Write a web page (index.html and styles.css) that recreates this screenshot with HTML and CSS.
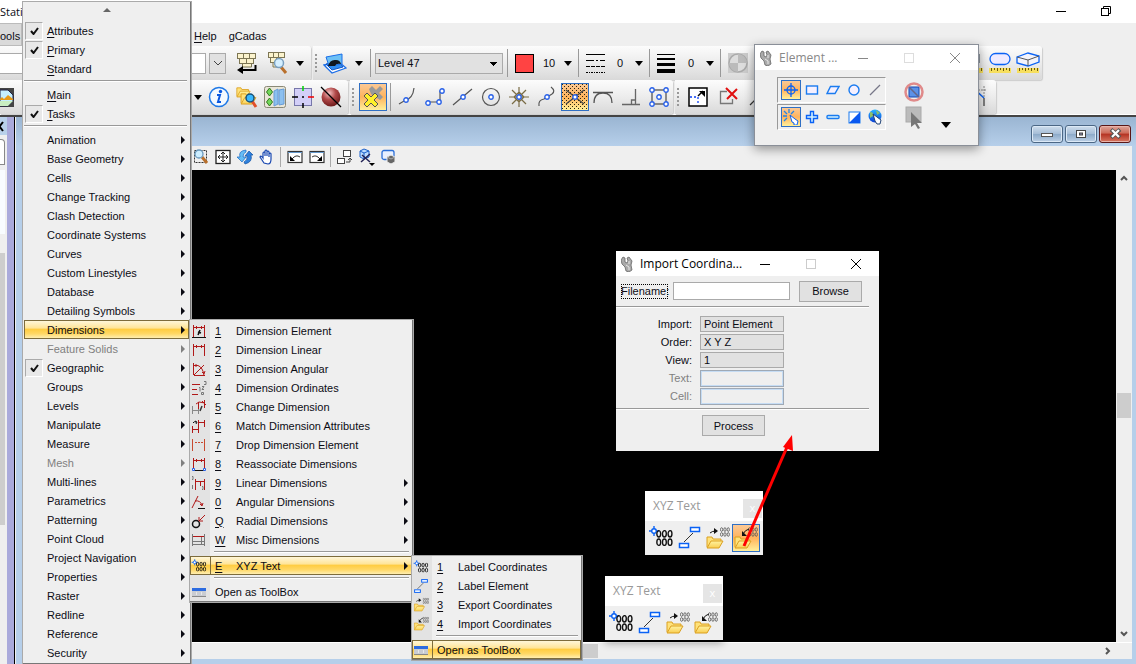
FILE: index.html
```html
<!DOCTYPE html>
<html lang="en">
<head>
<meta charset="utf-8">
<title>MicroStation</title>
<link rel="stylesheet" href="styles.css">
</head>
<body>
<svg class="defs" aria-hidden="true">
  <defs>
    <linearGradient id="gold" x1="0" y1="0" x2="0" y2="1"><stop offset="0" stop-color="#fff3a0"/><stop offset="1" stop-color="#f9cd50"/></linearGradient>
    <linearGradient id="skyblue" x1="0" y1="0" x2="0" y2="1"><stop offset="0" stop-color="#29b5ff"/><stop offset="1" stop-color="#0a3fd8"/></linearGradient>
    <radialGradient id="redball" cx=".4" cy=".3" r=".7"><stop offset="0" stop-color="#f6c4c4"/><stop offset=".5" stop-color="#b04848"/><stop offset="1" stop-color="#701c1c"/></radialGradient>
    <pattern id="dots" width="4" height="4" patternUnits="userSpaceOnUse"><path d="M0 0h1v1h-1zM2 2h1v1h-1z" fill="#2b2410"/></pattern>
    <symbol id="folder" viewBox="0 0 18 14"><path d="M1 12V2h5l1 2h8v3" fill="#ffe27a" stroke="#dba021"/><path d="M1 13l4-7h12l-4 7z" fill="url(#gold)" stroke="#dba021"/></symbol>
    <symbol id="digits" viewBox="0 0 16 15"><g fill="none" stroke="currentColor" stroke-width="1.3"><ellipse cx="2.6" cy="3.6" rx="1.8" ry="3"/><ellipse cx="7.9" cy="3.6" rx="1.8" ry="3"/><ellipse cx="13.2" cy="3.6" rx="1.8" ry="3"/><ellipse cx="2.6" cy="11.4" rx="1.8" ry="3"/><ellipse cx="7.9" cy="11.4" rx="1.8" ry="3"/><ellipse cx="13.2" cy="11.4" rx="1.8" ry="3"/></g></symbol>
    <symbol id="i-label" viewBox="0 0 28 28"><path d="M6 2v10M1 7h10" stroke="#0a62f5" stroke-width="1.4"/><circle cx="6" cy="7" r="2.3" fill="#fff" stroke="#0a62f5" stroke-width="1.4"/><use href="#digits" x="8" y="6" width="17" height="16" color="#111"/></symbol>
    <symbol id="i-element" viewBox="0 0 28 28"><path d="M8 18l9-9" stroke="#333"/><rect x="14.500" y="3.500" width="9" height="4" fill="#fff" stroke="#0a62f5" stroke-width="1.5"/><rect x="3.500" y="19.500" width="9" height="4" fill="#fff" stroke="#0a62f5" stroke-width="1.5"/></symbol>
    <symbol id="i-export" viewBox="0 0 28 28"><use href="#folder" x="2" y="11" width="18" height="14"/><use href="#digits" x="16" y="3" width="10" height="10" color="#555"/><path d="M6 9q2-2 6-2" fill="none" stroke="#111"/><path d="M10 4l4 3-4 3z" fill="#111"/></symbol>
    <symbol id="i-import" viewBox="0 0 28 28"><use href="#folder" x="2" y="11" width="18" height="14"/><use href="#digits" x="16" y="3" width="10" height="10" color="#555"/><path d="M11 10q2-4 6-5" fill="none" stroke="#111"/><path d="M10 7v5h5z" fill="#111"/></symbol>
    <symbol id="i-wrench" viewBox="0 0 12 16"><path d="M2 1l2 1v4l2 1 1-2-1-3 2-1 3 4-1 4 1 5-3 2-3-1-1-4-3-3-1-4z" fill="#aaa" stroke="#666" stroke-width=".8"/><path d="M5 9l3 2v3M8 5v3" fill="none" stroke="#e8e8e8"/></symbol>
    <symbol id="i-toolbox" viewBox="0 0 16 16"><rect x="1" y="5" width="14" height="8" rx="1" fill="#c9ccd2"/><rect x="1" y="4" width="14" height="3" fill="#2c6be0"/><path d="M5.500 8v3M10.500 8v3" stroke="#e8e8e8"/><path d="M1 12.500h14" stroke="#888"/></symbol>
    <symbol id="node" viewBox="0 0 6 6"><circle cx="3" cy="3" r="2.200" fill="#fff" stroke="#2a62e8" stroke-width="1.4"/></symbol>
    <symbol id="ruler" viewBox="0 0 22 5"><rect width="22" height="5" fill="#f7df5e"/><path d="M2.500 0v3M5.500 0v2M8.500 0v3M11.500 0v2M14.500 0v3M17.500 0v2M20.500 0v3" stroke="#6c5a10"/></symbol>
    <symbol id="i-check" viewBox="0 0 9 8"><path d="M1 4l2.500 3L8 1" fill="none" stroke="#111" stroke-width="2"/></symbol>
  </defs>
</svg>

<div class="app">
  <header class="titlebar">
    <span class="app-name">Stati</span>
    <div class="win-controls">
      <button aria-label="Minimize"><svg width="10" height="10"><path d="M0 5.500h10" stroke="#000"/></svg></button>
      <button aria-label="Restore"><svg width="10" height="10" fill="none" stroke="#000"><rect x=".5" y="2.500" width="7" height="7"/><path d="M2.500 2V.5h7v7H8"/></svg></button>
    </div>
  </header>

  <nav class="menubar">
    <button class="menu-open">ools</button>
    <button class="menu-help"><u>H</u>elp</button>
    <button>gCadas</button>
  </nav>

  <div class="toolbar">
    <div class="group group-keyin">
      <input class="keyin" aria-label="Key-in">
      <button class="combo-btn" aria-label="Key-in history"><svg width="10" height="6"><path d="M1 1l4 4 4-4" fill="none" stroke="#444"/></svg></button>
      <button class="tool w30" aria-label="Key-in"><svg width="22" height="22"><g fill="#fbf3cd" stroke="#7d7654"><rect x="1.500" y="1.500" width="6" height="5"/><rect x="7.500" y="1.500" width="6" height="5"/><rect x="13.500" y="1.500" width="6" height="5"/><rect x="3.500" y="6.500" width="7" height="5"/><rect x="10.500" y="6.500" width="7" height="5"/><path d="M6.500 12v3h9v-3"/></g><path d="M19.500 13v5H5" fill="none" stroke="#000" stroke-width="2"/><path d="M1 18l6-4v8z"/></svg></button>
      <button class="tool w30" aria-label="Browse key-ins"><svg width="22" height="22"><g fill="#fbf3cd" stroke="#7d7654"><rect x="2.500" y=".5" width="5" height="5"/><rect x="7.500" y=".5" width="5" height="5"/><rect x="12.500" y=".5" width="6" height="5"/><rect x="4.500" y="5.500" width="6" height="5"/><path d="M7 11v4h4"/></g><path d="M15 15l5 6" stroke="#b9702c" stroke-width="3"/><circle cx="13" cy="11" r="4.500" fill="#d5efff" stroke="#7aa0c0" stroke-width="1.500"/></svg></button>
      <button class="tool w16" aria-label="More"><svg width="8" height="5"><path d="M0 0h8L4 5z"/></svg></button>
    </div>
    <div class="group">
      <i class="grip"></i>
      <button class="tool w26" aria-label="Level manager"><svg width="24" height="22"><path d="M1 13l15-3 7 6-14 5z" fill="#fff" stroke="#1b6ee8" stroke-width="1.300"/><path d="M3 12l13-2 4 5-11 3z" fill="#2f8cf0" stroke="#1257c8"/><path d="M3 5l16-3v10l-13 2z" fill="#6cc0f5" stroke="#1b6ee8"/><path d="M5 14q2-7 8-6 4 0 5 4-5-1-6 2z" fill="#101820"/></svg></button>
      <button class="tool w21" aria-label="Level menu"><svg width="8" height="5"><path d="M0 0h8L4 5z"/></svg></button>
      <i class="sep"></i>
      <select class="level" aria-label="Active level"><option>Level 47</option></select>
      <i class="sep"></i>
      <button class="attr"><svg width="19" height="19"><rect x=".5" y=".5" width="18" height="18" fill="#ff4343" stroke="#000"/></svg><span>10</span><svg width="8" height="5"><path d="M0 0h8L4 5z"/></svg></button>
      <i class="sep"></i>
      <button class="attr"><svg width="19" height="21" stroke="#000"><path d="M0 1.500h19"/><path d="M0 7.500h19" stroke-dasharray="8 2 2 2"/><path d="M0 13.500h19" stroke-dasharray="4 1"/><path d="M0 19.500h19" stroke-dasharray="2 1 1 1"/></svg><span>0</span><svg width="8" height="5"><path d="M0 0h8L4 5z"/></svg></button>
      <i class="sep"></i>
      <button class="attr"><svg width="19" height="21"><path d="M0 1h18v1H0zM0 5h18v2H0zM0 10h18v3H0zM0 16h18v4H0z"/></svg><span>0</span><svg width="8" height="5"><path d="M0 0h8L4 5z"/></svg></button>
      <i class="sep"></i>
      <button class="tool w26" aria-label="Transparency"><svg width="22" height="22"><rect x="1" y="1" width="20" height="20" fill="#ccc"/><circle cx="11" cy="11" r="9" fill="#ddd" stroke="#aaa" stroke-width="1.500"/><path d="M11 2a9 9 0 0 1 9 9h-9zM11 20a9 9 0 0 1-9-9h9z" fill="#bbb"/></svg></button>
      <span class="fill-wide"></span>
      <button class="tool w28" aria-label="Measure distance"><svg width="22" height="22"><path d="M12 2h6v9h-6z" fill="#9ab8ec" stroke="#345"/><use href="#ruler" y="16" width="22" height="5"/></svg></button>
      <button class="tool w28" aria-label="Measure area"><svg width="22" height="22"><rect x="1" y="1.500" width="20" height="11" rx="5.500" fill="#eeeaff" stroke="#0a62f5" stroke-width="1.300"/><use href="#ruler" y="16" width="22" height="5"/></svg></button>
      <button class="tool w28" aria-label="Measure volume"><svg width="24" height="22"><path d="M1 5l11-4 11 3v6l-11 4-11-3z" fill="#f3f3fb" stroke="#0a62f5" stroke-width="1.300"/><path d="M1 5l11 3 11-4M12 8v6" fill="none" stroke="#555"/><use href="#ruler" x="1" y="16" width="22" height="5"/></svg></button>
    </div>
  </div>

  <div class="toolbar">
    <div class="group group-primary">
      <button class="tool raster" aria-label="Raster manager"><svg width="15" height="19"><rect width="14" height="19" fill="#444"/><path d="M0 2h8l5 5v6l-5 5H0z" fill="#c5efff" stroke="#224"/><path d="M0 11l2-2 2 2 4-4 5 4v1H0z" fill="#e89a18"/><path d="M0 13h13l-5 5H0z" fill="#c9efc2"/></svg></button>
      <button class="tool w14" aria-label="More"><svg width="8" height="5"><path d="M0 0h8L4 5z"/></svg></button>
      <button class="tool w28" aria-label="Element information"><svg width="22" height="22"><circle cx="11" cy="11" r="9.500" fill="#f4f9ff" stroke="#1e78e6" stroke-width="1.500"/><circle cx="12.500" cy="5.500" r="1.700" fill="#0a58e0"/><path d="M9 9h3l-2 7h3" fill="none" stroke="#0a58e0" stroke-width="2"/></svg></button>
      <button class="tool w28" aria-label="Project explorer"><svg width="24" height="24"><use href="#folder" x="1" y="1" width="15" height="12"/><use href="#folder" x="5" y="7" width="17" height="13"/><path d="M17 16l4 6" stroke="#e0502a" stroke-width="3"/><circle cx="15" cy="13" r="4" fill="#38b8ff" stroke="#175278" stroke-width="1.500"/></svg></button>
      <button class="tool w28" aria-label="Models"><svg width="22" height="22"><rect x=".5" y=".5" width="21" height="21" rx="2" fill="#e9e6d8" stroke="#8a8876"/><path d="M10 5l4-2v15l-4 2zM15 4l5-1v15l-5 1z" fill="#8cc0ef" stroke="#679bd6"/><path d="M5.500 2l3 4-3 4-3-4zM5.500 12l3 4-3 4-3-4z" fill="#72d95a" stroke="#34761f"/></svg></button>
      <button class="tool w28" aria-label="AccuDraw"><svg width="22" height="22"><rect x="2.500" y="2.500" width="17" height="17" fill="#d3cff8" stroke="#77a"/><path d="M11 0v5" stroke="#00d000" stroke-width="1.500"/><path d="M16 11h6" stroke="#e00" stroke-width="1.500"/><path d="M0 11h6M11 17v5M10 11h2" stroke="#000" stroke-width="1.500"/></svg></button>
      <button class="tool w28" aria-label="Disable"><svg width="22" height="22"><circle cx="11" cy="11" r="9.500" fill="url(#redball)"/><path d="M1 1l20 20" stroke="#000" stroke-width="1.300"/></svg></button>
    </div>
    <div class="group">
      <i class="grip"></i>
      <button class="tool w28 active" aria-label="AccuSnap"><svg width="24" height="24"><path d="M8 4l3-3 4 4 4-4 3 3-4 4 4 4-3 3-9-6z" fill="#999"/><path d="M3 11l3-3 4 4 4-4 3 3-4 4 4 4-3 3-4-4-4 4-3-3 4-4z" fill="#fff02a" stroke="#555"/></svg></button>
      <i class="sep tight"></i>
      <button class="tool w28" aria-label="Near snap"><svg width="22" height="22" fill="none" stroke="#555" stroke-width="1.200"><path d="M3 18l5-3q9-2 10-13"/><use href="#node" x="7" y="11" width="6" height="6"/></svg></button>
      <button class="tool w28" aria-label="Keypoint snap"><svg width="22" height="22" fill="none" stroke="#555" stroke-width="1.200"><path d="M5 16h11V5"/><use href="#node" x="1" y="14" width="6" height="6"/><use href="#node" x="12" y="13" width="6" height="6"/><use href="#node" x="15" y="2" width="6" height="6"/></svg></button>
      <button class="tool w28" aria-label="Midpoint snap"><svg width="22" height="22" fill="none" stroke="#555" stroke-width="1.200"><path d="M1 19L20 3"/><use href="#node" x="8" y="8" width="6" height="6"/></svg></button>
      <button class="tool w28" aria-label="Center snap"><svg width="22" height="22" fill="none" stroke="#555" stroke-width="1.200"><circle cx="11" cy="11" r="8.500"/><use href="#node" x="8" y="8" width="6" height="6"/></svg></button>
      <button class="tool w28" aria-label="Origin snap"><svg width="22" height="22" fill="none" stroke="#7a6c45" stroke-width="1.200"><path d="M11 1v20M1 11h20M4 4l14 14M18 4L4 18M11 6l5 5-5 5-5-5z"/><use href="#node" x="8" y="8" width="6" height="6"/></svg></button>
      <button class="tool w28" aria-label="Bisector snap"><svg width="22" height="22" fill="none" stroke="#555" stroke-width="1.200"><path d="M3 20q-1-6 5-7l8-5q4-3-1-7"/><use href="#node" x="8" y="8" width="6" height="6"/></svg></button>
      <button class="tool w28 active" aria-label="Intersection snap"><svg width="26" height="26"><rect width="26" height="26" fill="url(#dots)"/><path d="M4 6l18 14M22 6L4 20" stroke="#444" stroke-width="1.300"/><use href="#node" x="10" y="10" width="6" height="6"/></svg></button>
      <button class="tool w28" aria-label="Tangent snap"><svg width="22" height="22" fill="none" stroke="#555" stroke-width="1.300"><path d="M1 6.500h20M2 17q0-10 9-10t9 10"/></svg></button>
      <button class="tool w28" aria-label="Perpendicular snap"><svg width="22" height="22" fill="none" stroke="#666" stroke-width="1.300"><path d="M2 18.500h18M15.500 3v15M11.500 18v-4h4"/></svg></button>
      <button class="tool w28" aria-label="Point on snap"><svg width="22" height="22" fill="none" stroke="#555" stroke-width="1.300"><rect x="4" y="4" width="14" height="14"/><use href="#node" x="1" y="1" width="6" height="6"/><use href="#node" x="15" y="1" width="6" height="6"/><use href="#node" x="1" y="15" width="6" height="6"/><use href="#node" x="15" y="15" width="6" height="6"/><use href="#node" x="8" y="8" width="6" height="6"/></svg></button>
    </div>
    <div class="group">
      <i class="grip"></i>
      <button class="tool w28" aria-label="Scale"><svg width="20" height="20"><rect x="1" y="1" width="18" height="18" fill="#fff" stroke="#000" stroke-width="1.500"/><path d="M2 10h8v8" fill="none" stroke="#0a3ff5" stroke-width="1.300" stroke-dasharray="2 2"/><path d="M10 9l5-5" stroke="#000" stroke-width="1.500"/><path d="M11 4h6v6z"/></svg></button>
      <button class="tool w32" aria-label="Delete part"><svg width="20" height="20"><path d="M9 4.500H2.500v12h12V12" fill="none" stroke="#777" stroke-width="1.300"/><path d="M8 1l11 11M19 2L9 12" stroke="#e01010" stroke-width="2"/></svg></button>
      <button class="tool w28" aria-label="Extend line"><svg width="20" height="20"><path d="M2 18L18 2" stroke="#333" stroke-width="1.200"/></svg></button>
      <span class="fill-narrow"></span>
      <button class="tool w28" aria-label="Chamfer"><svg width="22" height="22"><path d="M1 1l12 11" stroke="#0a62f5" stroke-width="1.500"/><path d="M13 12v8" stroke="#444" stroke-width="1.300"/><path d="M4 4h12M13 0v11" stroke="#888" stroke-dasharray="2 1"/></svg></button>
    </div>
  </div>

  <main class="workspace">
    <aside class="dock"><button class="dock-close" aria-label="Close panel"><svg width="5" height="11"><path d="M-4 1l7 9M3 1l-7 9" stroke="#000" stroke-width="2"/></svg></button><div class="dock-tab"></div><div class="dock-list"></div><div class="dock-thumb"></div></aside>
    <section class="view">
      <div class="view-title">
        <button aria-label="Minimize view"><svg width="14" height="8"><rect x="1.500" y="3.500" width="11" height="3" fill="#fff" stroke="#555"/></svg></button>
        <button aria-label="Maximize view"><svg width="12" height="10"><rect x="1.500" y="1.500" width="9" height="7" fill="#fff" stroke="#444"/><rect x="4.500" y="4" width="3" height="2" fill="#88a" stroke="#444"/></svg></button>
        <button class="close" aria-label="Close view"><svg width="13" height="11"><path d="M2 1.500l9 8M11 1.500l-9 8" stroke="#555" stroke-width="4"/><path d="M3 2l7 7M10 2L3 9" stroke="#fff" stroke-width="2.200"/></svg></button>
      </div>
      <div class="view-tools">
        <button aria-label="Window area"><svg width="16" height="16"><rect x="1.500" y="1.500" width="12" height="12" fill="none" stroke="#333" stroke-dasharray="2 1"/><path d="M9 8l5 6" stroke="#b9702c" stroke-width="3"/><circle cx="6" cy="5" r="4" fill="#cdeeff" stroke="#6a98bc" stroke-width="1.300"/></svg></button>
        <button aria-label="Fit view"><svg width="16" height="16"><rect x="1" y="1.500" width="14" height="13" fill="#fff" stroke="#222" stroke-width="1.300"/><path d="M8 3v10M3 8h10M6 5l2-2 2 2M6 11l2 2 2-2M5 6L3 8l2 2M11 6l2 2-2 2" fill="none" stroke="#222"/></svg></button>
        <button aria-label="Rotate view"><svg width="16" height="16"><path d="M9 1Q1 2 3 8H0l5 5 4-5H6Q6 4 9 3z" fill="#65bdf5" stroke="#1869c4" stroke-width=".7"/><path d="M8 15q8-2 6-9h2l-4-4-4 5h2q1 4-3 6z" fill="#2d80dc" stroke="#1453a5" stroke-width=".7"/></svg></button>
        <button aria-label="Pan view"><svg width="16" height="16"><path d="M5 14L1 8q1-2 3 1V4q1-2 2 0v3-5q1-2 2 0v5-4q1-2 2 0v5-3q2-2 2 0v5q0 5-3 5z" fill="#fff" stroke="#1746b0" stroke-width="1.200"/></svg></button>
        <i></i>
        <button aria-label="View previous"><svg width="16" height="14"><rect x="1" y="1.500" width="14" height="11" fill="#fff" stroke="#333" stroke-width="1.200"/><path d="M1 2.500h14" stroke="#69c"/><path d="M5 9q4-5 8-2" fill="none" stroke="#333"/><path d="M3 6v5h5z"/></svg></button>
        <button aria-label="View next"><svg width="16" height="14"><rect x="1" y="1.500" width="14" height="11" fill="#fff" stroke="#333" stroke-width="1.200"/><path d="M1 2.500h14" stroke="#69c"/><path d="M11 9Q7 4 3 7" fill="none" stroke="#333"/><path d="M13 6v5H8z"/></svg></button>
        <i></i>
        <button aria-label="Copy view"><svg width="16" height="16" fill="#fff" stroke="#444"><rect x="6.500" y="1.500" width="7" height="6"/><rect x=".5" y="9.500" width="7" height="5"/><path d="M9 13h4V9m-2 2l2-2 2 2" fill="none"/></svg></button>
        <button aria-label="Clip volume"><svg width="18" height="20"><path d="M2 4l4-2 5 2v6l-5 2-4-2z" fill="#bcdcff" stroke="#1a5fc8"/><path d="M2 4l4 2 5-2M6 6v6" fill="none" stroke="#1a5fc8"/><path d="M3 15l9-8M12 15L4 8" stroke="#225" stroke-width="1.500"/><path d="M11 16h6l-3 3z"/></svg></button>
        <button aria-label="Clip mask"><svg width="16" height="16"><rect x="1" y="1.500" width="12" height="9" rx="2" fill="#e8f0ff" stroke="#2b6fd8" stroke-width="1.300"/><path d="M6 8l4-2 4 2v5l-4 2-4-2z" fill="#666" stroke="#eee"/><path d="M6 8l4 2 4-2" stroke="#aaa" fill="none"/></svg></button>
      </div>
      <div class="canvas-row">
        <div class="canvas"></div>
        <div class="vscroll">
          <button aria-label="Scroll up"><svg width="8" height="6"><path d="M1 5l3-3 3 3" fill="none" stroke="#555" stroke-width="2"/></svg></button>
          <div class="track"><div class="thumb"></div></div>
          <button aria-label="Scroll down"><svg width="8" height="6"><path d="M1 1l3 3 3-3" fill="none" stroke="#555" stroke-width="2"/></svg></button>
        </div>
      </div>
      <div class="hscroll"><div class="track"><div class="thumb"></div></div><button aria-label="Scroll right"><svg width="6" height="8"><path d="M1 1l3 3-3 3" fill="none" stroke="#555" stroke-width="2"/></svg></button></div>
    </section>
  </main>
</div>

<div class="window element-window">
  <div class="win-title inactive"><svg width="12" height="16"><use href="#i-wrench"/></svg><span>Element ...</span>
    <button aria-label="Minimize"><svg width="10" height="10"><path d="M0 5.500h10" stroke="currentColor"/></svg></button>
    <button aria-label="Maximize" disabled><svg width="10" height="10"><rect x=".5" y=".5" width="9" height="9" fill="none" stroke="#ddd"/></svg></button>
    <button aria-label="Close"><svg width="10" height="10"><path d="M0 0l10 10M10 0L0 10" stroke="currentColor"/></svg></button></div>
  <div class="select-body">
    <div class="select-rows">
      <div class="select-row">
        <button class="active" aria-label="Individual"><svg width="14" height="14" fill="none" stroke="#0a62f5" stroke-width="1.300"><circle cx="7" cy="7" r="4"/><path d="M7 0v14M0 7h14"/></svg></button>
        <button aria-label="Block"><svg width="14" height="14"><rect x="1.500" y="3" width="11" height="8" fill="#f5f0ff" stroke="#1a7bf0" stroke-width="1.400"/></svg></button>
        <button aria-label="Shape"><svg width="14" height="14"><path d="M4.500 3.500H13l-4 7H1z" fill="#f5f0ff" stroke="#1a7bf0" stroke-width="1.400"/></svg></button>
        <button aria-label="Circle"><svg width="14" height="14"><circle cx="7" cy="7" r="5" fill="#f5f0ff" stroke="#1a7bf0" stroke-width="1.400"/></svg></button>
        <button aria-label="Line"><svg width="14" height="14"><path d="M2 12L12 2" stroke="#778" stroke-width="1.200"/></svg></button>
      </div>
      <div class="select-row">
        <button class="active" aria-label="New"><svg width="16" height="16"><path d="M6 0v4M1 2l3 3M0 7h4M1 12l3-3M11 2L8 5" stroke="#2285e8" stroke-width="1.300"/><path d="M7 6l2 7 2 1v2h3l1-4-3-2z" fill="#fff" stroke="#0a62f5"/></svg></button>
        <button aria-label="Add"><svg width="14" height="14"><path d="M5.500 1.500h3v4h4v3h-4v4h-3v-4h-4v-3h4z" fill="#d4f2ff" stroke="#0a62f5" stroke-width="1.400"/></svg></button>
        <button aria-label="Subtract"><svg width="14" height="14"><rect x="1" y="5.500" width="12" height="3" rx="1" fill="#d4f2ff" stroke="#1a7bf0" stroke-width="1.400"/></svg></button>
        <button aria-label="Invert"><svg width="14" height="14"><rect x="2" y="2" width="11" height="11" fill="#fff" stroke="#1a7bf0"/><path d="M13 2v11H2z" fill="#0a58f0"/></svg></button>
        <button aria-label="Select all"><svg width="16" height="16"><circle cx="8" cy="7" r="6.500" fill="url(#skyblue)"/><path d="M3 3q4 0 3 4l-3 2zM9 1l4 3-3 2z" fill="#8bc06b"/><path d="M6 5l2 7 2 3h3l1-4-4-3z" fill="#fff" stroke="#247"/></svg></button>
      </div>
    </div>
    <div class="select-side">
      <button aria-label="Disable handles"><svg width="20" height="20"><rect x="5" y="5" width="10" height="10" fill="#5b91e8" stroke="#1746b0"/><path d="M5 5l10 10" stroke="#668" stroke-width="1.500"/><circle cx="10" cy="10" r="8.500" fill="none" stroke="#e08a8a" stroke-width="2.500"/></svg></button>
      <button aria-label="Show details"><svg width="18" height="24"><rect x="1" y="1" width="15" height="15" fill="#bbb" stroke="#aaa"/><path d="M6 6v15l4-3 3 5 2-1-3-5h5z" fill="#777"/></svg></button>
    </div>
    <button class="expand" aria-label="Expand"><svg width="10" height="6"><path d="M0 0h10L5 6z"/></svg></button>
  </div>
</div>

<form class="window import-window">
  <div class="win-title"><svg width="12" height="16"><use href="#i-wrench"/></svg><span>Import Coordina...</span>
    <button type="button" aria-label="Minimize"><svg width="10" height="10"><path d="M0 5.500h10" stroke="currentColor"/></svg></button>
    <button type="button" aria-label="Maximize" disabled><svg width="10" height="10"><rect x=".5" y=".5" width="9" height="9" fill="none" stroke="#ccc"/></svg></button>
    <button type="button" aria-label="Close"><svg width="10" height="10"><path d="M0 0l10 10M10 0L0 10" stroke="currentColor"/></svg></button></div>
  <div class="file-row"><label for="filename">Filename:</label><input id="filename"><button type="button">Browse</button></div>
  <div class="fields">
    <label for="f-import">Import:</label><select id="f-import"><option>Point Element</option></select>
    <label for="f-order">Order:</label><select id="f-order"><option>X Y Z</option></select>
    <label for="f-view">View:</label><select id="f-view"><option>1</option></select>
    <label for="f-text" class="off">Text:</label><input id="f-text" disabled>
    <label for="f-cell" class="off">Cell:</label><input id="f-cell" disabled>
  </div>
  <div class="process-row"><button type="button">Process</button></div>
</form>

<div class="window toolbox toolbox-a">
  <div class="box-title"><span>XYZ Text</span><button aria-label="Close">x</button></div>
  <div class="box-tools">
    <button aria-label="Label Coordinates"><svg width="28" height="28"><use href="#i-label"/></svg></button>
    <button aria-label="Label Element"><svg width="28" height="28"><use href="#i-element"/></svg></button>
    <button aria-label="Export Coordinates"><svg width="28" height="28"><use href="#i-export"/></svg></button>
    <button class="active" aria-label="Import Coordinates"><svg width="28" height="28"><use href="#i-import"/></svg></button>
  </div>
</div>
<div class="window toolbox toolbox-b">
  <div class="box-title"><span>XYZ Text</span><button aria-label="Close">x</button></div>
  <div class="box-tools">
    <button aria-label="Label Coordinates"><svg width="28" height="28"><use href="#i-label"/></svg></button>
    <button aria-label="Label Element"><svg width="28" height="28"><use href="#i-element"/></svg></button>
    <button aria-label="Export Coordinates"><svg width="28" height="28"><use href="#i-export"/></svg></button>
    <button aria-label="Import Coordinates"><svg width="28" height="28"><use href="#i-import"/></svg></button>
  </div>
</div>

<svg class="pointer" width="60" height="120" aria-hidden="true"><path d="M4 112L47 13" stroke="#f00" stroke-width="3"/><path d="M52 1l1 16-10-4z" fill="#f00"/></svg>

<div class="menu menu-tools">
  <button class="scroll-up" aria-label="Scroll menu up"><svg width="8" height="4"><path d="M0 4h8L4 0z" fill="#666"/></svg></button>
  <button class="item"><span class="check"><svg width="9" height="8"><use href="#i-check"/></svg></span><span><u>A</u>ttributes</span></button>
  <button class="item"><span class="check"><svg width="9" height="8"><use href="#i-check"/></svg></span><span><u>P</u>rimary</span></button>
  <button class="item"><i></i><span><u>S</u>tandard</span></button>
  <hr>
  <button class="item"><i></i><span><u>M</u>ain</span></button>
  <button class="item"><span class="check"><svg width="9" height="8"><use href="#i-check"/></svg></span><span><u>T</u>asks</span></button>
  <hr>
  <button class="item more"><i></i><span>Animation</span></button>
  <button class="item more"><i></i><span>Base Geometry</span></button>
  <button class="item more"><i></i><span>Cells</span></button>
  <button class="item more"><i></i><span>Change Tracking</span></button>
  <button class="item more"><i></i><span>Clash Detection</span></button>
  <button class="item more"><i></i><span>Coordinate Systems</span></button>
  <button class="item more"><i></i><span>Curves</span></button>
  <button class="item more"><i></i><span>Custom Linestyles</span></button>
  <button class="item more"><i></i><span>Database</span></button>
  <button class="item more"><i></i><span>Detailing Symbols</span></button>
  <button class="item more hot"><i></i><span>Dimensions</span></button>
  <button class="item more" disabled><i></i><span>Feature Solids</span></button>
  <button class="item more"><span class="check"><svg width="9" height="8"><use href="#i-check"/></svg></span><span>Geographic</span></button>
  <button class="item more"><i></i><span>Groups</span></button>
  <button class="item more"><i></i><span>Levels</span></button>
  <button class="item more"><i></i><span>Manipulate</span></button>
  <button class="item more"><i></i><span>Measure</span></button>
  <button class="item more" disabled><i></i><span>Mesh</span></button>
  <button class="item more"><i></i><span>Multi-lines</span></button>
  <button class="item more"><i></i><span>Parametrics</span></button>
  <button class="item more"><i></i><span>Patterning</span></button>
  <button class="item more"><i></i><span>Point Cloud</span></button>
  <button class="item more"><i></i><span>Project Navigation</span></button>
  <button class="item more"><i></i><span>Properties</span></button>
  <button class="item more"><i></i><span>Raster</span></button>
  <button class="item more"><i></i><span>Redline</span></button>
  <button class="item more"><i></i><span>Reference</span></button>
  <button class="item more"><i></i><span>Security</span></button>
</div>

<div class="menu submenu menu-dims">
  <button class="item"><svg width="16" height="16" fill="none" stroke="#b01818"><path d="M2.500 2v12M13.500 2v12M3 4.500h10M5.500 3v3M10.500 3v3"/><path d="M9 7l-2 5M7 9l3 1" stroke="#111" stroke-width="1.500"/><path d="M1 14.500h14" stroke="#111"/></svg><u>1</u><span>Dimension Element</span></button>
  <button class="item"><svg width="16" height="16" fill="none" stroke="#b01818"><path d="M2.500 2v12M13.500 2v12M3 4.500h10M5.500 3v3M10.500 3v3"/></svg><u>2</u><span>Dimension Linear</span></button>
  <button class="item"><svg width="16" height="16" fill="none" stroke="#b01818"><path d="M2.500 2v12M3 14L13 4M3 4.500h4q5 2 6 10M3 14.500h11M5 3v3M11 11l2 2 1-3"/></svg><u>3</u><span>Dimension Angular</span></button>
  <button class="item"><svg width="16" height="16" fill="none" stroke="#b01818"><path d="M1 4.500h8M1 9.500h5M1 14.500h6"/><path d="M8 7.500h1v4M11 6.500h2l-2 3h2M13 1.500h2v3h-2M10.500 12.500h2v2h-2z" stroke="#777"/></svg><u>4</u><span>Dimension Ordinates</span></button>
  <button class="item"><svg width="16" height="16" fill="none" stroke="#888"><path d="M1.500 7v8M7.500 7v8M2 11.500h5"/><path d="M7.500 3v7M13.500 1v8M5 5l3-2 6 1M11 2l4 4" stroke="#b01818"/><path d="M11 7l-2 5" stroke="#333" stroke-width="1.500"/></svg><u>5</u><span>Change Dimension</span></button>
  <button class="item"><svg width="16" height="16" fill="none" stroke="#b01818"><path d="M1.500 8v7M7.500 2v13M13.500 2v7M2 11.500h5M8 4.500h5"/><path d="M2 5q1-2 3-1M4 3l2 1-1 2" stroke="#111"/></svg><u>6</u><span>Match Dimension Attributes</span></button>
  <button class="item"><svg width="16" height="16" fill="none" stroke="#c84a30"><path d="M1.500 2v12M13.500 2v12"/><path d="M4 5.500h8" stroke-dasharray="2 1"/></svg><u>7</u><span>Drop Dimension Element</span></button>
  <button class="item"><svg width="16" height="16" fill="none" stroke="#b01818"><path d="M2.500 2v11M13.500 2v11M3 4.500h10M5.500 3v3M10.500 3v3"/><path d="M3 14.500h10" stroke="#111"/><path d="M1.500 12.500h2v2h-2zM12.500 12.500h2v2h-2z" fill="#fff" stroke="#2a62e8"/></svg><u>8</u><span>Reassociate Dimensions</span></button>
  <button class="item more"><svg width="16" height="16" fill="none" stroke="#b01818"><path d="M4.500 4v11M13.500 4v11M9.500 6v5M4 6.500h10"/><path d="M1 1.500h1v3H1M1.500 10v4M11 11.500h1v3h-1" stroke="#777"/></svg><u>9</u><span>Linear Dimensions</span></button>
  <button class="item more"><svg width="16" height="16" fill="none" stroke="#b01818"><path d="M1 14L7 2M4 7q5-1 7 4M9 10l2 2 1-3"/><path d="M7 14.500h7" stroke="#111"/></svg><u>0</u><span>Angular Dimensions</span></button>
  <button class="item more"><svg width="16" height="16" fill="none" stroke="#111"><circle cx="5" cy="11" r="3.500" stroke-width="1.500"/><path d="M8 8l6-6M8 4v4h4" stroke="#b01818"/></svg><u>Q</u><span>Radial Dimensions</span></button>
  <button class="item more"><svg width="16" height="16" fill="none" stroke="#777"><path d="M1.500 2v12M13.500 2v12M2 9.500h11M2 12.500h11M10.500 4v9"/><path d="M2 4.500h11" stroke="#b01818"/></svg><u>W</u><span>Misc Dimensions</span></button>
  <hr>
  <button class="item more hot"><svg width="16" height="16" viewBox="0 2 26 22"><use href="#i-label" width="28" height="28"/></svg><u>E</u><span>XYZ Text</span></button>
  <hr>
  <button class="item open"><svg width="16" height="16"><use href="#i-toolbox"/></svg><span>Open as ToolBox</span></button>
</div>

<div class="menu submenu menu-xyz">
  <button class="item"><svg width="16" height="16" viewBox="0 2 26 22"><use href="#i-label" width="28" height="28"/></svg><u>1</u><span>Label Coordinates</span></button>
  <button class="item"><svg width="16" height="16" viewBox="1 1 25 25"><use href="#i-element" width="28" height="28"/></svg><u>2</u><span>Label Element</span></button>
  <button class="item"><svg width="16" height="16" viewBox="1 2 25 25"><use href="#i-export" width="28" height="28"/></svg><u>3</u><span>Export Coordinates</span></button>
  <button class="item"><svg width="16" height="16" viewBox="1 2 25 25"><use href="#i-import" width="28" height="28"/></svg><u>4</u><span>Import Coordinates</span></button>
  <hr>
  <button class="item open hot"><svg width="16" height="16"><use href="#i-toolbox"/></svg><span>Open as ToolBox</span></button>
</div>
</body>
</html>
```

FILE: styles.css
```css
* { box-sizing: border-box; }
html, body { height: 100%; margin: 0; }
body { position: relative; overflow: hidden; background: #efefef; color: #0c0c14; font: 11px/16px "Liberation Sans", Arial, sans-serif; }
button, input, select { margin: 0; padding: 0; border: 0; border-radius: 0; background: none; color: inherit; font: inherit; }
select { appearance: none; }
button { display: flex; align-items: center; justify-content: center; white-space: nowrap; }
svg { display: block; flex: none; }
u { text-underline-offset: 2px; }
.defs { position: absolute; width: 0; height: 0; }

.app { display: flex; flex-direction: column; height: 100%; }
.titlebar { display: flex; justify-content: space-between; flex: none; height: 23px; background: #fff; font: 11px/23px "Open Sans", "Noto Sans", sans-serif; }
.win-controls { display: flex; padding-right: 8px; }
.win-controls button { width: 45px; height: 21px; }

.menubar { display: flex; flex: none; height: 23px; }
.menubar button { padding: 2px 6px 0; }
.menubar .menu-open { width: 22px; padding: 2px 0 0; border: 1px solid #bbb; border-left: 0; background: #dadada; justify-content: flex-start; }
.menubar .menu-help { margin-left: 166px; }

.toolbar { display: flex; flex: none; height: 34px; gap: 2px; }
.toolbar + .toolbar { height: 35px; border-bottom: 1px solid #fff; }
.group { display: flex; align-items: center; flex: none; border-radius: 0 3px 3px 0; background: linear-gradient(#fcfcfc, #ececec 50%, #d9d9d9); box-shadow: 1px 1px 1px #ccc; }
.group-keyin { width: 311px; }
.group-primary { width: 348px; }
.keyin { width: 206px; height: 21px; border: 1px solid #aaa; border-left: 0; background: #fff; }
.combo-btn { width: 17px; height: 21px; margin: 0 6px 0 3px; border: 1px solid #aaa; background: #e1e1e1; }
.tool { flex: none; height: 28px; }
.w14 { width: 14px; }
.w16 { width: 16px; }
.w21 { width: 21px; }
.w26 { width: 26px; }
.w28 { width: 28px; }
.w30 { width: 30px; }
.w32 { width: 32px; }
.raster { width: 191px; justify-content: flex-start; }
.active { border: 1px solid #2f6fc4; background: linear-gradient(#fbc996, #ffb35c 50%, #fff09a); }
.grip { flex: none; width: 2px; height: 18px; margin: 0 5px 0 2px; background: repeating-linear-gradient(#999 0 2px, transparent 2px 4px); }
.sep { flex: none; width: 1px; height: 28px; margin: 0 4px 0 1px; background: #999; }
.sep.tight { margin: 0 2px 0 3px; }
.level { width: 128px; height: 21px; margin-right: 3px; padding: 0 2px; border: 1px solid #aaa; background: conic-gradient(from -45deg at 50% 100%, #000 90deg, transparent 0) no-repeat right 5px top 8px / 8px 4px, #e1e1e1; background: conic-gradient(from 135deg at 50% 0, transparent 0) no-repeat, conic-gradient(from -45deg at 50% 100%, #000 90deg, transparent 0) no-repeat right 5px top 8px / 8px 4px, #e1e1e1; }
.attr { flex: none; width: 65px; height: 26px; justify-content: flex-start; gap: 2px; padding-left: 3px; }
.attr span { flex: 1; text-align: center; }
.attr svg:last-child { margin-right: 5px; }
.fill-wide { width: 207px; }
.fill-narrow { width: 196px; }

.workspace { display: flex; flex: 1; min-height: 0; border-top: 2px solid #444; }
.dock { display: flex; flex-direction: column; flex: none; width: 16px; background: linear-gradient(90deg, #efefef 7px, #aaaadb 7px 14px, #000 14px 15px, #efefef 15px); }
.dock-close { width: 7px; height: 18px; background: #b9d1ea; justify-content: flex-start; }
.dock-tab { width: 5px; height: 26px; margin-top: 4px; border: 1px solid #888; border-left: 0; border-radius: 0 4px 0 0; background: #fff; }
.dock-list { width: 5px; height: 64px; margin-top: 5px; background: #f8fcff; }
.dock-thumb { width: 5px; flex: 1; margin: 19px 0 139px; background: #cdcdcd; }
.view { display: flex; flex-direction: column; flex: 1; min-width: 0; padding: 0 4px 5px 6px; background: #b6cfea; }
.view-title { display: flex; gap: 2px; justify-content: flex-end; align-items: center; flex: none; height: 29px; margin: 0 -4px 0 -6px; padding: 4px 5px 0 0; background: linear-gradient(#9ab5d2, #b6cfea); }
.view-title button { width: 32px; height: 18px; border: 1px solid #4b6785; border-radius: 3px; background: linear-gradient(#cfdeed, #a4bcd6 50%, #8ba9c8 50%, #bcd0e6); box-shadow: inset 0 0 0 1px #dce9f6; }
.view-title .close { border-color: #591717; background: linear-gradient(#dda59b, #cd6a58 45%, #b43222 50%, #d67762); box-shadow: inset 0 0 0 1px #e9b3a9; }
.view-tools { display: flex; align-items: center; flex: none; height: 24px; padding: 0 0 2px 168px; background: #efefef; }
.view-tools button { width: 22px; height: 22px; }
.view-tools i { width: 1px; height: 20px; margin: 0 3px 0 2px; background: #aaa; }
.canvas-row { display: flex; flex: 1; min-height: 0; }
.canvas { flex: 1; background: #000; }
.vscroll { display: flex; flex-direction: column; width: 16px; background: #efefef; }
.vscroll button { height: 16px; width: 16px; }
.vscroll .track { flex: 1; padding-top: 207px; }
.vscroll .thumb { width: 14px; height: 25px; margin-left: 1px; background: #cdcdcd; }
.hscroll { display: flex; align-items: center; flex: none; height: 17px; padding-right: 16px; background: #efefef; border-top: 1px solid #fff; }
.hscroll .track { flex: 1; padding-left: 400px; }
.hscroll .thumb { width: 176px; height: 14px; background: #cdcdcd; }
.hscroll button { width: 17px; height: 16px; }

.window { position: absolute; background: #efefef; }
.win-title { display: flex; align-items: center; height: 25px; padding-left: 5px; background: #fff; color: #000; font: 12px/20px "Open Sans", "Noto Sans", sans-serif; white-space: nowrap; }
.win-title span { flex: 1; padding-left: 7px; }
.win-title button { width: 46px; height: 24px; }
.win-title.inactive { color: #888; }
.element-window { left: 754px; top: 44px; width: 225px; height: 102px; border: 1px solid #8a8f98; box-shadow: 0 3px 10px #0006; }
.select-body { display: flex; align-items: flex-start; padding: 7px 0 0 22px; }
.select-rows { display: grid; gap: 1px; }
.select-row { display: flex; gap: 1px; padding: 2px 0 2px 3px; border: 1px solid #fff; border-top-color: #999; border-left-color: #999; }
.select-row button { width: 20px; height: 20px; }
.select-side { display: grid; gap: 4px; padding: 4px 0 0 18px; }
.select-side button { width: 20px; height: 22px; }
.expand { width: 12px; height: 10px; margin: 43px 0 0 16px; }

.import-window { left: 616px; top: 251px; width: 263px; height: 200px; }
.file-row { display: flex; align-items: center; height: 31px; padding-left: 5px; margin-right: 10px; border-bottom: 1px solid #999; box-shadow: 0 1px #fff; }
.file-row label { width: 47px; outline: 1px dotted #000; outline-offset: -1px; line-height: 15px; }
.file-row input { width: 117px; height: 18px; margin: 0 9px 0 5px; border: 1px solid #aaa; background: #fff; }
.import-window .file-row button, .process-row button { width: 63px; height: 21px; border: 1px solid #aaa; background: #e1e1e1; }
.fields { display: grid; grid-template-columns: 76px 84px; grid-auto-rows: 16px; column-gap: 8px; row-gap: 2px; align-items: center; margin-right: 10px; padding: 9px 0 4px; border-bottom: 1px solid #999; box-shadow: 0 1px #fff; }
.fields label { text-align: right; }
.fields .off { color: #808080; }
.fields select { height: 16px; padding-left: 3px; border: 1px solid #aaa; background: #e1e1e1; line-height: 14px; color: #0c0c14; }
.fields input { width: 84px; height: 17px; border: 1px solid #9fa9b5; background: #efefef; box-shadow: inset 0 0 0 1px #c5dcf4; }
.process-row { padding: 6px 0 0 86px; }

.toolbox { width: 118px; box-shadow: 0 3px 8px #0005; }
.toolbox-a { left: 645px; top: 491px; }
.toolbox-b { left: 605px; top: 576px; }
.box-title { display: flex; align-items: center; justify-content: space-between; height: 30px; padding: 0 1px 0 8px; background: #fff; color: #999; font: 12px/20px "Open Sans", "Noto Sans", sans-serif; }
.box-title button { width: 19px; height: 19px; margin-top: 4px; background: #e5e5e5; color: #fff; font-size: 11px; }
.box-tools { display: flex; padding: 3px; }
.box-tools button { width: 28px; height: 28px; }
.pointer { position: absolute; left: 740px; top: 434px; }

.menu { position: absolute; display: flex; flex-direction: column; background: #efefef; border: 1px solid #fff; border-right: 2px solid #777; border-bottom: 2px solid #777; outline: 1px solid #aaa; outline-offset: -1px; }
.menu hr { width: calc(100% - 2px); height: 2px; margin: 2px 0 3px; border: 0; border-top: 1px solid #999; background: #fff; }
.item { flex: none; justify-content: flex-start; height: 19px; border: 1px solid transparent; text-align: left; }
.item:disabled { color: #808080; }
.more { padding-right: 3px; }
.more::after { content: ""; margin-left: auto; border: 4px solid transparent; border-left-color: currentColor; border-right: 0; }
.hot { border-color: #7d6c3c; background: linear-gradient(#fff6d8, #ffe59a 40%, #ffcd43 50%, #ffd866 75%, #ffeeb0); }
.menu-tools { left: 22px; top: 1px; width: 170px; min-height: 100%; padding: 0 1px; }
.scroll-up { height: 19px; padding-bottom: 3px; }
.menu-tools .check, .menu-tools .item > i { display: flex; flex: none; align-items: center; justify-content: center; width: 18px; height: 18px; margin-right: 4px; }
.menu-tools .check { border: 1px solid #aaa; border-right-color: #fff; border-bottom-color: #fff; background: #e8e8e8; }

.submenu { padding: 1px 0 0; background: linear-gradient(90deg, #e3e3e3 20px, #efefef 20px); }
.submenu .item > svg { width: 16px; height: 16px; margin-right: 8px; }
.submenu .item > u { width: 21px; flex: none; }
.submenu .hot { background: linear-gradient(90deg, transparent 19px, #7d6c3c 19px 20px, transparent 20px), linear-gradient(#fff6d8, #ffe59a 40%, #ffcd43 50%, #ffd866 75%, #ffeeb0); }
.submenu hr { width: auto; margin: 2px 3px 3px 24px; }
.menu-dims { left: 189px; top: 319px; width: 225px; }
.menu-xyz { left: 411px; top: 555px; width: 172px; }
```
